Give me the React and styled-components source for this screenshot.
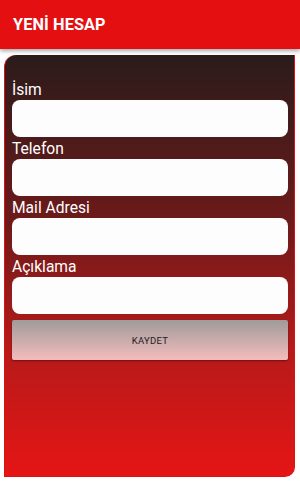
import React from 'react';
import styled, { createGlobalStyle } from 'styled-components';

const GlobalStyle = createGlobalStyle`
  html, body {
    margin: 0;
    padding: 0;
    background: #ffffff;
    font-family: Roboto, "Liberation Sans", sans-serif;
  }
`;

const Screen = styled.div`
  width: 300px;
  height: 481px;
  display: flex;
  flex-direction: column;
  background: #ffffff;
  overflow: hidden;
`;

const Header = styled.div`
  height: 49px;
  flex-shrink: 0;
  background: #e30f10;
  display: flex;
  align-items: center;
  padding-left: 13px;
  box-shadow: 0 2px 4px rgba(0, 0, 0, 0.35);
  position: relative;
  z-index: 1;
`;

const Title = styled.h1`
  margin: 0;
  font-size: 16.3px;
  font-weight: 700;
  color: #ffffff;
  letter-spacing: 0.1px;
`;

const Panel = styled.div`
  margin: 6px 5px 4px 4px;
  flex: 1;
  background: linear-gradient(#2b1b1b 0%, #6e1a1a 40%, #b61a1a 70%, #e51515 100%);
  border: 1px solid #e01010;
  border-top: none;
  border-radius: 12px 0 10px 0;
  padding: 25px 6px 0 7px;
  display: flex;
  flex-direction: column;
`;

const Field = styled.div`
  display: flex;
  flex-direction: column;
  margin-bottom: 2px;
`;

const Label = styled.label`
  color: #ffffff;
  font-size: 15.6px;
  line-height: 20px;
`;

const Input = styled.input`
  height: 37px;
  box-sizing: border-box;
  border: none;
  border-radius: 8px;
  background: #fdfdfd;
  outline: none;
  padding: 0 8px;
  font-family: inherit;
`;

const SaveButton = styled.button`
  margin-top: 4px;
  height: 40px;
  border: none;
  border-radius: 2px;
  background: linear-gradient(#a09b9b, #f3bcbc);
  box-shadow: 0 1px 2px rgba(0, 0, 0, 0.4);
  color: #1d1d1d;
  font-family: inherit;
  font-size: 9.5px;
  font-weight: 400;
  letter-spacing: 0.3px;
`;

const fields = ['İsim', 'Telefon', 'Mail Adresi', 'Açıklama'];

export default function App() {
  return (
    <Screen>
      <GlobalStyle />
      <Header>
        <Title>YENİ HESAP</Title>
      </Header>
      <Panel>
        {fields.map((f) => (
          <Field key={f}>
            <Label>{f}</Label>
            <Input />
          </Field>
        ))}
        <SaveButton>KAYDET</SaveButton>
      </Panel>
    </Screen>
  );
}
